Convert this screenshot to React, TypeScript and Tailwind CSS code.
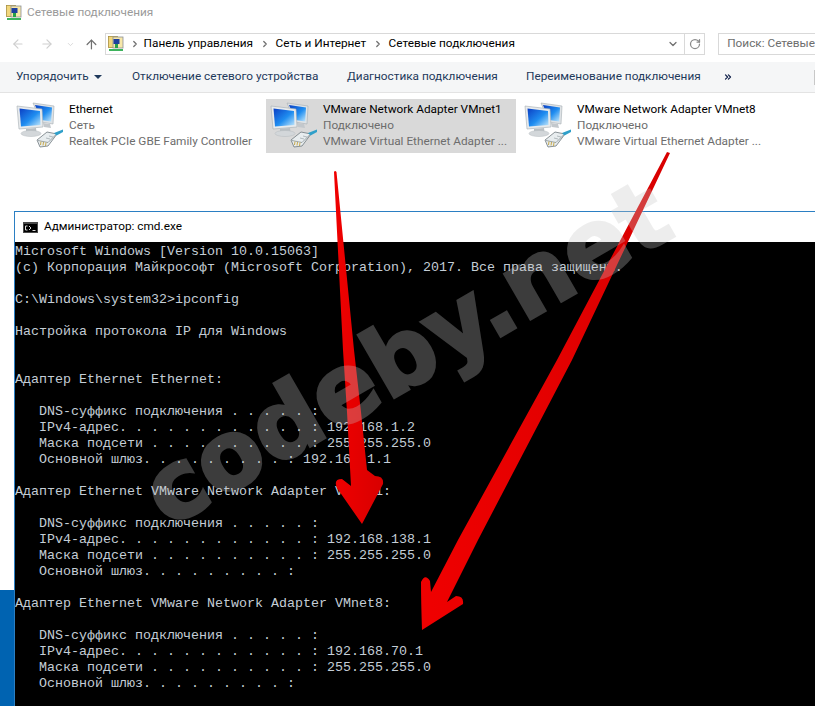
import { ArrowLeft, ArrowRight, ArrowUp, ChevronDown, ChevronRight, ChevronsRight, RotateCw } from 'lucide-react'

const dots = (n: number) => ' .'.repeat(n)

const consoleLines = [
  'Microsoft Windows [Version 10.0.15063]',
  '(c) Корпорация Майкрософт (Microsoft Corporation), 2017. Все права защищены.',
  '',
  'C:\\Windows\\system32>ipconfig',
  '',
  'Настройка протокола IP для Windows',
  '',
  '',
  'Адаптер Ethernet Ethernet:',
  '',
  `   DNS-суффикс подключения${dots(5)} :`,
  `   IPv4-адрес.${dots(11)} : 192.168.1.2`,
  `   Маска подсети${dots(10)} : 255.255.255.0`,
  `   Основной шлюз.${dots(8)} : 192.168.1.1`,
  '',
  'Адаптер Ethernet VMware Network Adapter VMnet1:',
  '',
  `   DNS-суффикс подключения${dots(5)} :`,
  `   IPv4-адрес.${dots(11)} : 192.168.138.1`,
  `   Маска подсети${dots(10)} : 255.255.255.0`,
  `   Основной шлюз.${dots(8)} :`,
  '',
  'Адаптер Ethernet VMware Network Adapter VMnet8:',
  '',
  `   DNS-суффикс подключения${dots(5)} :`,
  `   IPv4-адрес.${dots(11)} : 192.168.70.1`,
  `   Маска подсети${dots(10)} : 255.255.255.0`,
  `   Основной шлюз.${dots(8)} :`,
]

const connections = [
  { name: 'Ethernet', status: 'Сеть', device: 'Realtek PCIe GBE Family Controller', selected: false },
  { name: 'VMware Network Adapter VMnet1', status: 'Подключено', device: 'VMware Virtual Ethernet Adapter ...', selected: true },
  { name: 'VMware Network Adapter VMnet8', status: 'Подключено', device: 'VMware Virtual Ethernet Adapter ...', selected: false },
]

const toolbarItems = [
  { label: 'Отключение сетевого устройства', className: 'w-[215px]' },
  { label: 'Диагностика подключения', className: 'w-[179px]' },
  { label: 'Переименование подключения', className: 'w-[197px]' },
]

function NetworkIcon() {
  return (
    <svg width="48" height="48" viewBox="0 0 48 48" className="shrink-0">
      <defs>
        <linearGradient id="screen" x1="0" y1="0" x2="1" y2="1">
          <stop offset="0" stopColor="#0b3fc4" />
          <stop offset="0.55" stopColor="#1f8df0" />
          <stop offset="1" stopColor="#c6e9fb" />
        </linearGradient>
      </defs>
      {/* back monitor */}
      <path d="M17 2 L38 5 L37 23 L25 21 Z" fill="#dfe3e6" stroke="#a4acb1" strokeWidth="0.6" />
      <path d="M19 4 L36 6.500 L35.200 20.500 L25 19 Z" fill="url(#screen)" />
      <path d="M27 22 L34 23 L35 27 L28 26 Z" fill="#c3c8cc" />
      {/* front monitor */}
      <path d="M1 5 L26 8 L27 26 L3 28 Z" fill="#e8ebed" stroke="#a4acb1" strokeWidth="0.6" />
      <path d="M3.500 7.500 L24 10 L24.500 24 L5 25.500 Z" fill="url(#screen)" />
      <path d="M10 28 L20 27 L20.500 31 L10 32 Z" fill="#b9bfc3" />
      <ellipse cx="15" cy="32.500" rx="10" ry="3" fill="#d3d7da" stroke="#b4babe" strokeWidth="0.5" />
      {/* plug */}
      <path d="M21 39 L31 31 L41 33 L32 45 L24 46 Z" fill="#e8edef" stroke="#6f787d" strokeWidth="0.8" />
      <path d="M22 39.500 L32 41.500 L40 33.500" fill="none" stroke="#7d868b" strokeWidth="0.7" />
      <path d="M25 40.500 L24.500 44 M27.500 41 L27 44.500 M30 41.500 L29.500 45" stroke="#c4a23a" strokeWidth="0.9" />
      <path d="M33 35 L37 36 M30 37 L34 38" stroke="#9aa3a8" strokeWidth="0.7" />
      <path d="M38 32 L47 28.500 L47 31 L40.500 34.500 Z" fill="#2f9fc9" />
    </svg>
  )
}

function FolderNetIcon() {
  return (
    <svg width="16" height="16" viewBox="0 0 16 16" className="shrink-0">
      <rect x="0.500" y="0.500" width="9" height="11" fill="#f2d77c" stroke="#a88f3e" strokeWidth="0.8" />
      <rect x="5" y="1" width="10" height="11" fill="#f7e7a8" stroke="#8a8f96" strokeWidth="0.8" />
      <rect x="5.500" y="3" width="6" height="5" fill="#1d3f9e" />
      <rect x="7" y="8" width="3" height="4" fill="#27a04a" />
      <rect x="1" y="13" width="14" height="2" fill="#3db35c" />
    </svg>
  )
}

function Arrows() {
  return (
    <svg width="815" height="706" viewBox="0 0 815 706" className="absolute left-0 top-0">
      <defs>
        <linearGradient id="arrowRed" x1="0" y1="0" x2="1" y2="0">
          <stop offset="0" stopColor="#f00000" />
          <stop offset="1" stopColor="#d80000" />
        </linearGradient>
      </defs>
      <path
        d="M334 172 Q335 170 336.500 172 L354 350 L361 412 L367 470 L375 476 Q384 476 383 484 L362 524 L337 488 Q333 479 342 479 L351 486 L347 412 L343 350 Z"
        fill="url(#arrowRed)"
      />
      <path
        d="M667 152 L670 153 L572 360 L478 540 L447 602 L456 596 Q464 596 463 604 L422 630 Q421 600 421 582 Q425 573 430 581 L431 592 L458 540 L557 360 Z"
        fill="url(#arrowRed)"
      />
    </svg>
  )
}

export default function App() {
  return (
    <div className="relative h-[706px] w-[815px] overflow-hidden bg-white font-['Roboto',sans-serif] text-[11.8px]">
      {/* explorer title */}
      <div className="flex h-[25px] items-center pl-[6px] text-[#9a9a9a]">
        <FolderNetIcon />
        <span className="ml-[5px]">Сетевые подключения</span>
      </div>

      {/* navigation bar */}
      <div className="mt-[8px] flex h-[22px] items-center pl-[11px]">
        <ArrowLeft size={14} className="text-[#cfcfcf]" />
        <ArrowRight size={14} className="ml-[15px] text-[#cfcfcf]" />
        <ChevronDown size={9} className="ml-[12px] text-[#cfcfcf]" />
        <ArrowUp size={15} className="ml-[9px] text-[#707070]" />
        <div className="ml-[6px] flex h-[22px] w-[605px] items-center border border-[#d9d9d9] pl-[2px]">
          <FolderNetIcon />
          <ChevronRight size={10} strokeWidth={3} className="ml-[6px] shrink-0 text-[#707070]" />
          <span className="ml-[4px] w-[108px] whitespace-nowrap text-black">Панель управления</span>
          <ChevronRight size={10} strokeWidth={3} className="ml-[8px] shrink-0 text-[#707070]" />
          <span className="ml-[6px] w-[89px] whitespace-nowrap text-black">Сеть и Интернет</span>
          <ChevronRight size={10} strokeWidth={3} className="ml-[8px] shrink-0 text-[#707070]" />
          <span className="ml-[6px] whitespace-nowrap text-black">Сетевые подключения</span>
          <div className="ml-auto flex h-full items-center">
            <ChevronDown size={12} strokeWidth={2.5} className="mr-[5px] text-[#707070]" />
            <div className="flex h-full w-[20px] items-center justify-center border-l border-[#d9d9d9]">
              <RotateCw size={12} strokeWidth={2.5} className="text-[#8a8a8a]" />
            </div>
          </div>
        </div>
        <div className="ml-[13px] flex h-[22px] flex-1 items-center whitespace-nowrap border border-r-0 border-[#d9d9d9] pl-[8px] text-[#6d6d6d]">
          Поиск: Сетевые
        </div>
      </div>

      {/* command bar */}
      <div className="mt-[7px] flex h-[31px] items-center border-b border-[#e3e3e3] bg-[#f5f6f7] pl-[16px] text-[#1e395b]">
        <span className="w-[76px] whitespace-nowrap">Упорядочить</span>
        <span className="ml-[2px] h-0 w-0 border-x-[4px] border-t-[4px] border-x-transparent border-t-[#1e395b]" />
        <span className="w-[30px]" />
        {toolbarItems.map((item) => (
          <span key={item.label} className={`whitespace-nowrap ${item.className}`}>
            {item.label}
          </span>
        ))}
        <ChevronsRight size={10} strokeWidth={3} className="text-[#10204a]" />
        <span className="ml-auto h-[15px] w-px bg-[#c8c8c8]" />
      </div>

      {/* connections */}
      <div className="mt-[6px] grid h-[54px] grid-cols-[254px_254px_254px] pl-[12px]">
        {connections.map((c) => (
          <div key={c.name} className={`flex w-[250px] pl-[4px] ${c.selected ? 'bg-[#d9d9d9]' : ''}`}>
            <div className="pt-[2px]">
              <NetworkIcon />
            </div>
            <div className="ml-[5px] whitespace-nowrap pt-[2px] leading-[16px]">
              <div className="text-black">{c.name}</div>
              <div className="text-[#6d6d6d]">{c.status}</div>
              <div className="text-[#6d6d6d]">{c.device}</div>
            </div>
          </div>
        ))}
      </div>

      {/* console window */}
      <div className="ml-[14px] mt-[58px] border-l border-t border-[#2b7fc3]">
        <div className="flex h-[30px] items-center pl-[8px] text-black">
          <svg width="15" height="11" viewBox="0 0 15 11" className="shrink-0">
            <rect width="15" height="11" fill="#4a4a4a" />
            <rect x="1" y="2" width="13" height="8" fill="#000" />
            <path d="M4.500 4 L2.500 4 L2.500 8 L4.500 8 M6 4 L8 6 L6 8 M9.500 8.500 L12.500 8.500" stroke="#d8d8d8" fill="none" />
          </svg>
          <span className="ml-[6px]">Администратор: cmd.exe</span>
        </div>
        <div className="h-[464px] bg-black pt-[2px] font-['Liberation_Mono',monospace] text-[13.33px] leading-[16px] text-[#c4cdd6]">
          {consoleLines.map((line, i) => (
            <div key={i} className="h-[16px] whitespace-pre">
              {line}
            </div>
          ))}
        </div>
      </div>

      {/* desktop visible behind the window */}
      <div className="absolute bottom-0 left-0 top-[590px] w-[14px] bg-[#0063b1]" />

      <Arrows />

      {/* watermark */}
      <div className="absolute left-[151px] top-[450px] origin-left -rotate-30 whitespace-nowrap font-['DejaVu_Sans',sans-serif] text-[95px] font-bold leading-[100px] text-[#c6c6c6] opacity-30 [-webkit-text-stroke:3px_#c6c6c6]">
        codeby.net
      </div>
    </div>
  )
}
